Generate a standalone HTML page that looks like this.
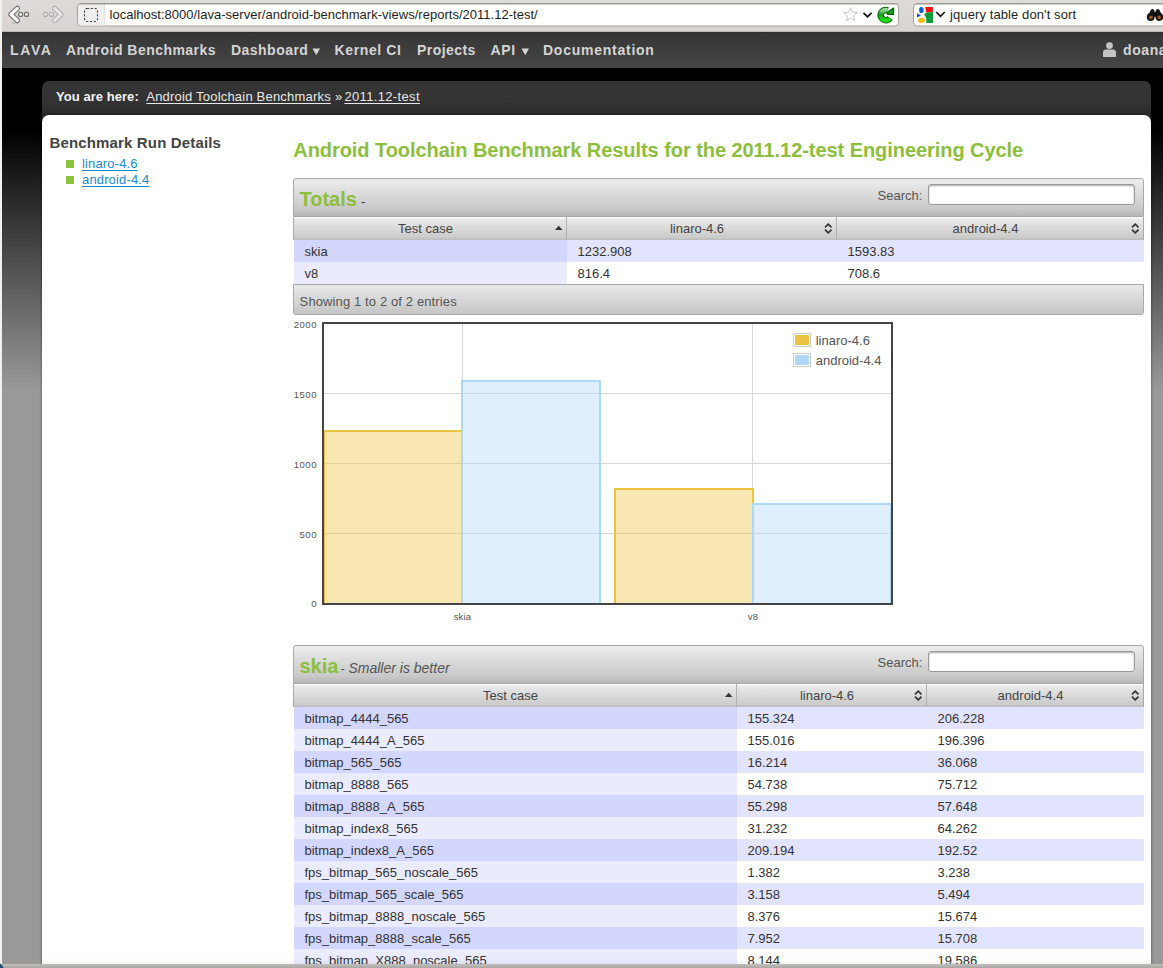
<!DOCTYPE html>
<html><head><meta charset="utf-8">
<style>
*{box-sizing:border-box;margin:0;padding:0}
html,body{width:1163px;height:968px;overflow:hidden;background:#dad6d3;font-family:"Liberation Sans",sans-serif;position:relative}
.a{position:absolute;white-space:nowrap}
#lframe{left:0;top:0;width:2px;height:968px;background:#f3f2f0;z-index:5}
#toolbar{left:2px;top:0;width:1161px;height:32px;background:linear-gradient(#dedad7,#d8d4d1);border-bottom:1px solid #bdb9b5}
#status{left:0;top:964px;width:1163px;height:4px;background:linear-gradient(#c3bfbb,#a9a5a2);z-index:5}
#viewport{left:2px;top:32px;width:1161px;height:932px;background:linear-gradient(#000 0px,#000 98px,#999 358px,#999 100%)}
#nav{left:2px;top:32px;width:1161px;height:36px;background:linear-gradient(#2e2e2e,#363636 2px,#454545 34px,#4a4a4a)}
#crumb{left:42px;top:81px;width:1109px;height:44px;background:linear-gradient(#353535,#333 20px,#2a2a2a 34px);border-radius:7px 7px 0 0}
#content{left:42px;top:115px;width:1109px;height:900px;background:#fff;border-radius:7px 7px 0 0;box-shadow:0 0 3px rgba(0,0,0,.55)}
.tbar{background:linear-gradient(#ededed,#c8c8c8 82%,#b6b6b6);border:1px solid #a8a8a8;border-radius:3px 3px 0 0}
.tfoot{background:linear-gradient(#e9e9e9,#c5c5c5);border:1px solid #a8a8a8;border-radius:0 0 3px 3px}
.th{background:linear-gradient(#fafafa,#fafafa 1px,#e9e9e9 2px,#cacaca 21px,#bebebe 22px);border-right:1px solid #b0b0b0}
.sinput{background:#fff;border:1px solid #9a9a9a;border-radius:3px;box-shadow:inset 0 1px 2px rgba(0,0,0,.35)}
.tb{font-size:13px;color:#222;line-height:13px}
#fade{left:42px;top:958px;width:1109px;height:6px;background:linear-gradient(rgba(0,0,0,0),rgba(0,0,0,.045))}

</style></head>
<body>
<div class="a" id="lframe"></div>
<div class="a" id="toolbar"></div>
<svg class="a" style="left:0;top:0" width="1163" height="32">
<defs>
<linearGradient id="rg" x1="0" y1="0" x2="0" y2="1"><stop offset="0" stop-color="#8fd88f"/><stop offset=".45" stop-color="#1d9a1d"/><stop offset="1" stop-color="#18e018"/></linearGradient>
</defs>
<ellipse cx="15" cy="23" rx="4.5" ry="1.1" fill="#bdb9b5" opacity=".6"/>
<path d="M17.4 8.3L10.9 14.4L17.4 20.5" fill="none" stroke="#6c6c6c" stroke-width="5.2" stroke-linecap="round" stroke-linejoin="round"/>
<path d="M17.4 8.3L10.9 14.4L17.4 20.5" fill="none" stroke="#fafafa" stroke-width="3.1" stroke-linecap="round" stroke-linejoin="round"/>
<circle cx="20.6" cy="14.4" r="2.05" fill="#fff" stroke="#6c6c6c" stroke-width="1.2"/>
<circle cx="26.5" cy="14.4" r="2.05" fill="#fff" stroke="#6c6c6c" stroke-width="1.2"/>
<path d="M54.6 8.3L61.1 14.4L54.6 20.5" fill="none" stroke="#b0aeab" stroke-width="5.2" stroke-linecap="round" stroke-linejoin="round"/>
<path d="M54.6 8.3L61.1 14.4L54.6 20.5" fill="none" stroke="#e6e4e2" stroke-width="3.1" stroke-linecap="round" stroke-linejoin="round"/>
<circle cx="45.5" cy="14.4" r="2.05" fill="#e8e6e4" stroke="#b2b0ad" stroke-width="1.2"/>
<circle cx="51.5" cy="14.4" r="2.05" fill="#e8e6e4" stroke="#b2b0ad" stroke-width="1.2"/>
<!-- url bar -->
<rect x="77.5" y="3.5" width="821" height="22.5" rx="3.5" fill="#fff" stroke="#a5a19d"/>
<path d="M81 4H104V25.5H81Q78 25.5 78 22.5V7Q78 4 81 4z" fill="#efefef"/>
<path d="M104.5 4V25.5" stroke="#e2e2e2"/>
<path d="M78.5 5.5Q79 4 81 4.2H898" stroke="#8a8682" stroke-width="1" fill="none" opacity=".6"/>
<rect x="84.5" y="8.5" width="13" height="13" rx="2.5" fill="none" stroke="#444" stroke-width="1.1" stroke-dasharray="2.2 1.6"/>
<path d="M850.5 7.6L852.4 12.3L857.4 12.6L853.5 15.8L854.8 20.7L850.5 18L846.2 20.7L847.5 15.8L843.6 12.6L848.6 12.3z" fill="#fff" stroke="#c8c8c8" stroke-width="1"/>
<path d="M863.5 12.8L867.5 16.8L871.5 12.8" fill="none" stroke="#111" stroke-width="1.7"/>
<path d="M890 18A5.1 5.1 0 1 1 887.6 10.3" fill="none" stroke="#0b640b" stroke-width="6.6"/>
<path d="M890 18A5.1 5.1 0 1 1 887.6 10.3" fill="none" stroke="url(#rg)" stroke-width="4.6"/>
<path d="M886.6 12.6L893.6 8V14.4H887.4z" fill="#1c9c1c" stroke="#0b640b" stroke-width="1.1" stroke-linejoin="round"/>
<!-- search bar -->
<rect x="913.5" y="3.5" width="300" height="22.5" rx="3.5" fill="#fff" stroke="#a5a19d"/>
<path d="M914.5 5.5Q915 4 917 4.2H1163" stroke="#8a8682" stroke-width="1" fill="none" opacity=".6"/>
<ellipse cx="921.4" cy="10" rx="2.3" ry="3.1" fill="#1060d0"/>
<path d="M917 13.2L921 15.6L917 17.4z" fill="#1650b8"/>
<ellipse cx="921.5" cy="20.3" rx="3.4" ry="2.6" fill="#f2b80e"/>
<path d="M925.2 7H932.9V12.5H925.8Q926.2 10 925.2 7z" fill="#ee1111"/>
<path d="M924 14.2Q926 12.2 929 12.2H933V23H926.2Q927.2 18 924 14.2z" fill="#0d9a3a"/>
<path d="M936.3 12L940.5 16.3L944.7 12" fill="none" stroke="#111" stroke-width="1.7"/>
<!-- binoculars -->
<path d="M1147.5 16.5L1150.6 10.3Q1151.3 9 1152.6 9Q1154 9 1154.4 10.5L1154.6 12H1155.6L1155.8 10.5Q1156.2 9 1157.6 9Q1158.9 9 1159.6 10.3L1162.8 16.5z" fill="#161616"/>
<circle cx="1150.7" cy="17" r="3.9" fill="#161616"/>
<circle cx="1159.4" cy="17" r="3.9" fill="#161616"/>
<rect x="1153.5" y="12" width="3.2" height="4.5" fill="#0a0a0a"/>
<circle cx="1150.9" cy="17.4" r="2" fill="#7a3c0c"/>
<circle cx="1159.2" cy="17.4" r="2" fill="#7a3c0c"/>
<circle cx="1150.9" cy="17.2" r="1" fill="#c86a1e"/>
<circle cx="1159.2" cy="17.2" r="1" fill="#c86a1e"/>
</svg>
<div class="a" style="left:109.5px;top:7.5px;font-size:13px;line-height:13px;color:#1e1e1e;letter-spacing:0.02px">localhost:8000/lava-server/android-benchmark-views/reports/2011.12-test/</div>
<div class="a" style="left:950px;top:7.5px;font-size:13px;line-height:13px;color:#1e1e1e;letter-spacing:0.1px">jquery table don't sort</div>
<div class="a" id="viewport"></div>
<div class="a" id="nav"></div>
<div class="a" style="left:10px;top:42.95px;font-size:14px;line-height:14px;color:#d4d4d4;font-weight:bold;font-style:normal;letter-spacing:1.65px">LAVA</div>
<div class="a" style="left:66px;top:42.95px;font-size:14px;line-height:14px;color:#d4d4d4;font-weight:bold;font-style:normal;letter-spacing:0.47px">Android Benchmarks</div>
<div class="a" style="left:231px;top:42.95px;font-size:14px;line-height:14px;color:#d4d4d4;font-weight:bold;font-style:normal;letter-spacing:0.47px">Dashboard</div>
<div class="a" style="left:334.5px;top:42.95px;font-size:14px;line-height:14px;color:#d4d4d4;font-weight:bold;font-style:normal;letter-spacing:0.62px">Kernel CI</div>
<div class="a" style="left:417px;top:42.95px;font-size:14px;line-height:14px;color:#d4d4d4;font-weight:bold;font-style:normal;letter-spacing:0.45px">Projects</div>
<div class="a" style="left:490.5px;top:42.95px;font-size:14px;line-height:14px;color:#d4d4d4;font-weight:bold;font-style:normal;letter-spacing:0.7px">API</div>
<div class="a" style="left:543px;top:42.95px;font-size:14px;line-height:14px;color:#d4d4d4;font-weight:bold;font-style:normal;letter-spacing:0.75px">Documentation</div>
<div class="a" style="left:1123px;top:42.95px;font-size:14px;line-height:14px;color:#d4d4d4;font-weight:bold;font-style:normal;letter-spacing:0.6px">doanac</div>
<svg class="a" style="left:311.5px;top:47.5px" width="9" height="8"><path d="M0.5 0.5h7.5l-3.75 6.8z" fill="#d4d4d4"/></svg>
<svg class="a" style="left:520.5px;top:47.5px" width="9" height="8"><path d="M0.5 0.5h7.5l-3.75 6.8z" fill="#d4d4d4"/></svg>
<svg class="a" style="left:1103px;top:42px" width="13" height="15"><circle cx="6.5" cy="3.6" r="3.4" fill="#c4c4c4"/><path d="M0 15V10.5Q0 7.6 3 7.6H10Q13 7.6 13 10.5V15z" fill="#c4c4c4"/></svg>
<div class="a" id="crumb"></div>
<div class="a" id="content"></div>
<div class="a" style="left:56px;top:89.60px;font-size:13px;line-height:13px;color:#f2f2f2;font-weight:bold;font-style:normal;letter-spacing:0.05px">You are here:</div>
<div class="a" style="left:146.3px;top:89.60px;font-size:13px;line-height:13px;color:#e8e8e8;font-weight:normal;font-style:normal;text-decoration:underline;text-underline-offset:2px;letter-spacing:0.2px">Android Toolchain Benchmarks</div>
<div class="a" style="left:335px;top:89.60px;font-size:13px;line-height:13px;color:#e8e8e8;font-weight:normal;font-style:normal;">»</div>
<div class="a" style="left:344.4px;top:89.60px;font-size:13px;line-height:13px;color:#e8e8e8;font-weight:normal;font-style:normal;text-decoration:underline;text-underline-offset:2px;letter-spacing:0.35px">2011.12-test</div>
<div class="a" style="left:49.5px;top:135.30px;font-size:15px;line-height:15px;color:#444;font-weight:bold;font-style:normal;letter-spacing:0.15px">Benchmark Run Details</div>
<div class="a" style="left:66px;top:160px;width:8px;height:8px;background:#8dc23f"></div>
<div class="a" style="left:66px;top:176px;width:8px;height:8px;background:#8dc23f"></div>
<div class="a" style="left:82px;top:156.60px;font-size:13px;line-height:13px;color:#1a8ad0;font-weight:normal;font-style:normal;text-decoration:underline;text-underline-offset:2px;letter-spacing:0.15px">linaro-4.6</div>
<div class="a" style="left:82px;top:172.60px;font-size:13px;line-height:13px;color:#1a8ad0;font-weight:normal;font-style:normal;text-decoration:underline;text-underline-offset:2px;letter-spacing:0.15px">android-4.4</div>
<div class="a" style="left:293.3px;top:140.07px;font-size:20px;line-height:20px;color:#8dbe3d;font-weight:bold;font-style:normal;letter-spacing:-0.06px">Android Toolchain Benchmark Results for the 2011.12-test Engineering Cycle</div>
<div class="a tbar" style="left:293px;top:178px;width:851px;height:39px"></div>
<div class="a" style="left:299.5px;top:189.07px;font-size:20px;line-height:20px;color:#8dbe3d;font-weight:bold;font-style:normal;">Totals</div>
<div class="a" style="left:361px;top:195.00px;font-size:13px;line-height:13px;color:#333;font-weight:normal;font-style:normal;">-</div>
<div class="a" style="left:877.6px;top:189.00px;font-size:13px;line-height:13px;color:#555;font-weight:normal;font-style:normal;">Search:</div>
<div class="a sinput" style="left:928px;top:184px;width:207px;height:21px"></div>
<div class="a th" style="left:293px;top:217px;width:274px;height:23px;border-left:1px solid #a8a8a8"></div>
<div class="a" style="left:225.5px;width:400px;text-align:center;top:222.00px;font-size:13px;line-height:13px;color:#444;font-weight:normal;">Test case</div>
<svg class="a" style="left:554.5px;top:225px" width="8" height="6"><path d="M0 5H7.5L3.75 0.8z" fill="#333"/></svg>
<div class="a th" style="left:567px;top:217px;width:270px;height:23px"></div>
<div class="a" style="left:497.0px;width:400px;text-align:center;top:222.00px;font-size:13px;line-height:13px;color:#444;font-weight:normal;">linaro-4.6</div>
<svg class="a" style="left:824.3px;top:223px" width="9" height="11"><path d="M1 4.4L4.25 1.1L7.5 4.4M1 6.6L4.25 9.9L7.5 6.6" fill="none" stroke="#333" stroke-width="1.6"/></svg>
<div class="a th" style="left:837px;top:217px;width:307px;height:23px;border-right:1px solid #a8a8a8"></div>
<div class="a" style="left:785.5px;width:400px;text-align:center;top:222.00px;font-size:13px;line-height:13px;color:#444;font-weight:normal;">android-4.4</div>
<svg class="a" style="left:1131.3px;top:223px" width="9" height="11"><path d="M1 4.4L4.25 1.1L7.5 4.4M1 6.6L4.25 9.9L7.5 6.6" fill="none" stroke="#333" stroke-width="1.6"/></svg>
<div class="a" style="left:294px;top:240px;width:273px;height:22px;background:#d3d6ff"></div>
<div class="a" style="left:304.5px;top:245.00px;font-size:13px;line-height:13px;color:#333;font-weight:normal;font-style:normal;">skia</div>
<div class="a" style="left:567px;top:240px;width:270px;height:22px;background:#e2e4ff"></div>
<div class="a" style="left:577.5px;top:245.00px;font-size:13px;line-height:13px;color:#333;font-weight:normal;font-style:normal;">1232.908</div>
<div class="a" style="left:837px;top:240px;width:307px;height:22px;background:#e2e4ff"></div>
<div class="a" style="left:847.5px;top:245.00px;font-size:13px;line-height:13px;color:#333;font-weight:normal;font-style:normal;">1593.83</div>
<div class="a" style="left:294px;top:262px;width:273px;height:22px;background:#eaebff"></div>
<div class="a" style="left:304.5px;top:267.00px;font-size:13px;line-height:13px;color:#333;font-weight:normal;font-style:normal;">v8</div>
<div class="a" style="left:567px;top:262px;width:270px;height:22px;background:#fff"></div>
<div class="a" style="left:577.5px;top:267.00px;font-size:13px;line-height:13px;color:#333;font-weight:normal;font-style:normal;">816.4</div>
<div class="a" style="left:837px;top:262px;width:307px;height:22px;background:#fff"></div>
<div class="a" style="left:847.5px;top:267.00px;font-size:13px;line-height:13px;color:#333;font-weight:normal;font-style:normal;">708.6</div>
<div class="a tfoot" style="left:293px;top:284px;width:851px;height:31px"></div>
<div class="a" style="left:299.6px;top:295.00px;font-size:13px;line-height:13px;color:#555;font-weight:normal;font-style:normal;letter-spacing:0.12px">Showing 1 to 2 of 2 entries</div>
<svg class="a" style="left:0;top:0" width="1163" height="968"><path d="M324 393.5H891" stroke="#d8d8d8" stroke-width="1"/><path d="M324 463.5H891" stroke="#d8d8d8" stroke-width="1"/><path d="M324 533.5H891" stroke="#d8d8d8" stroke-width="1"/><path d="M462.5 324V603" stroke="#d8d8d8" stroke-width="1"/><path d="M752.5 324V603" stroke="#d8d8d8" stroke-width="1"/><rect x="324" y="431" width="138" height="172" fill="#edc240" fill-opacity="0.4"/><path d="M324 603V431H462V603" fill="none" stroke="#edc240" stroke-width="2"/><rect x="462" y="381" width="138" height="222" fill="#afd8f8" fill-opacity="0.4"/><path d="M462 603V381H600V603" fill="none" stroke="#afd8f8" stroke-width="2"/><rect x="615" y="489" width="138" height="114" fill="#edc240" fill-opacity="0.4"/><path d="M615 603V489H753V603" fill="none" stroke="#edc240" stroke-width="2"/><rect x="753" y="504" width="138" height="99" fill="#afd8f8" fill-opacity="0.4"/><path d="M753 603V504H891V603" fill="none" stroke="#afd8f8" stroke-width="2"/><rect x="323" y="323" width="569" height="281" fill="none" stroke="#454545" stroke-width="2"/><rect x="793.5" y="333.5" width="17" height="13" fill="#fff" stroke="#cccccc" stroke-width="1"/><rect x="795" y="335" width="14" height="10" fill="#edc240"/><rect x="793.5" y="353.5" width="17" height="13" fill="#fff" stroke="#cccccc" stroke-width="1"/><rect x="795" y="355" width="14" height="10" fill="#afd8f8"/></svg>
<div class="a" style="left:217px;width:100px;text-align:right;top:319.96px;font-size:9.5px;line-height:9.5px;color:#545454;letter-spacing:0.55px">2000</div>
<div class="a" style="left:217px;width:100px;text-align:right;top:389.96px;font-size:9.5px;line-height:9.5px;color:#545454;letter-spacing:0.55px">1500</div>
<div class="a" style="left:217px;width:100px;text-align:right;top:459.96px;font-size:9.5px;line-height:9.5px;color:#545454;letter-spacing:0.55px">1000</div>
<div class="a" style="left:217px;width:100px;text-align:right;top:529.96px;font-size:9.5px;line-height:9.5px;color:#545454;letter-spacing:0.55px">500</div>
<div class="a" style="left:217px;width:100px;text-align:right;top:598.96px;font-size:9.5px;line-height:9.5px;color:#545454;letter-spacing:0.55px">0</div>
<div class="a" style="left:362.5px;width:200px;text-align:center;top:611.96px;font-size:9.5px;line-height:9.5px;color:#545454;letter-spacing:0.2px">skia</div>
<div class="a" style="left:653px;width:200px;text-align:center;top:611.96px;font-size:9.5px;line-height:9.5px;color:#545454;letter-spacing:0.2px">v8</div>
<div class="a" style="left:815.7px;top:334.00px;font-size:13px;line-height:13px;color:#545454;">linaro-4.6</div>
<div class="a" style="left:815.7px;top:354.00px;font-size:13px;line-height:13px;color:#545454;">android-4.4</div>
<div class="a tbar" style="left:293px;top:645px;width:851px;height:39px"></div>
<div class="a" style="left:299.5px;top:656.07px;font-size:20px;line-height:20px;color:#8dbe3d;font-weight:bold;font-style:normal;">skia</div>
<div class="a" style="left:340.5px;top:662.00px;font-size:13px;line-height:13px;color:#555;font-weight:normal;font-style:normal;">- <i style="font-size:14px">Smaller is better</i></div>
<div class="a" style="left:877.6px;top:656.00px;font-size:13px;line-height:13px;color:#555;font-weight:normal;font-style:normal;">Search:</div>
<div class="a sinput" style="left:928px;top:651px;width:207px;height:21px"></div>
<div class="a th" style="left:293px;top:684px;width:444px;height:23px;border-left:1px solid #a8a8a8"></div>
<div class="a" style="left:310.5px;width:400px;text-align:center;top:689.00px;font-size:13px;line-height:13px;color:#444;font-weight:normal;">Test case</div>
<svg class="a" style="left:724.5px;top:692px" width="8" height="6"><path d="M0 5H7.5L3.75 0.8z" fill="#333"/></svg>
<div class="a th" style="left:737px;top:684px;width:190px;height:23px"></div>
<div class="a" style="left:627.0px;width:400px;text-align:center;top:689.00px;font-size:13px;line-height:13px;color:#444;font-weight:normal;">linaro-4.6</div>
<svg class="a" style="left:914.3px;top:690px" width="9" height="11"><path d="M1 4.4L4.25 1.1L7.5 4.4M1 6.6L4.25 9.9L7.5 6.6" fill="none" stroke="#333" stroke-width="1.6"/></svg>
<div class="a th" style="left:927px;top:684px;width:217px;height:23px;border-right:1px solid #a8a8a8"></div>
<div class="a" style="left:830.5px;width:400px;text-align:center;top:689.00px;font-size:13px;line-height:13px;color:#444;font-weight:normal;">android-4.4</div>
<svg class="a" style="left:1131.3px;top:690px" width="9" height="11"><path d="M1 4.4L4.25 1.1L7.5 4.4M1 6.6L4.25 9.9L7.5 6.6" fill="none" stroke="#333" stroke-width="1.6"/></svg>
<div class="a" style="left:294px;top:707px;width:443px;height:22px;background:#d3d6ff"></div>
<div class="a" style="left:304.5px;top:712.00px;font-size:13px;line-height:13px;color:#333;font-weight:normal;font-style:normal;">bitmap_4444_565</div>
<div class="a" style="left:737px;top:707px;width:190px;height:22px;background:#e2e4ff"></div>
<div class="a" style="left:747.5px;top:712.00px;font-size:13px;line-height:13px;color:#333;font-weight:normal;font-style:normal;">155.324</div>
<div class="a" style="left:927px;top:707px;width:217px;height:22px;background:#e2e4ff"></div>
<div class="a" style="left:937.5px;top:712.00px;font-size:13px;line-height:13px;color:#333;font-weight:normal;font-style:normal;">206.228</div>
<div class="a" style="left:294px;top:729px;width:443px;height:22px;background:#eaebff"></div>
<div class="a" style="left:304.5px;top:734.00px;font-size:13px;line-height:13px;color:#333;font-weight:normal;font-style:normal;">bitmap_4444_A_565</div>
<div class="a" style="left:737px;top:729px;width:190px;height:22px;background:#fff"></div>
<div class="a" style="left:747.5px;top:734.00px;font-size:13px;line-height:13px;color:#333;font-weight:normal;font-style:normal;">155.016</div>
<div class="a" style="left:927px;top:729px;width:217px;height:22px;background:#fff"></div>
<div class="a" style="left:937.5px;top:734.00px;font-size:13px;line-height:13px;color:#333;font-weight:normal;font-style:normal;">196.396</div>
<div class="a" style="left:294px;top:751px;width:443px;height:22px;background:#d3d6ff"></div>
<div class="a" style="left:304.5px;top:756.00px;font-size:13px;line-height:13px;color:#333;font-weight:normal;font-style:normal;">bitmap_565_565</div>
<div class="a" style="left:737px;top:751px;width:190px;height:22px;background:#e2e4ff"></div>
<div class="a" style="left:747.5px;top:756.00px;font-size:13px;line-height:13px;color:#333;font-weight:normal;font-style:normal;">16.214</div>
<div class="a" style="left:927px;top:751px;width:217px;height:22px;background:#e2e4ff"></div>
<div class="a" style="left:937.5px;top:756.00px;font-size:13px;line-height:13px;color:#333;font-weight:normal;font-style:normal;">36.068</div>
<div class="a" style="left:294px;top:773px;width:443px;height:22px;background:#eaebff"></div>
<div class="a" style="left:304.5px;top:778.00px;font-size:13px;line-height:13px;color:#333;font-weight:normal;font-style:normal;">bitmap_8888_565</div>
<div class="a" style="left:737px;top:773px;width:190px;height:22px;background:#fff"></div>
<div class="a" style="left:747.5px;top:778.00px;font-size:13px;line-height:13px;color:#333;font-weight:normal;font-style:normal;">54.738</div>
<div class="a" style="left:927px;top:773px;width:217px;height:22px;background:#fff"></div>
<div class="a" style="left:937.5px;top:778.00px;font-size:13px;line-height:13px;color:#333;font-weight:normal;font-style:normal;">75.712</div>
<div class="a" style="left:294px;top:795px;width:443px;height:22px;background:#d3d6ff"></div>
<div class="a" style="left:304.5px;top:800.00px;font-size:13px;line-height:13px;color:#333;font-weight:normal;font-style:normal;">bitmap_8888_A_565</div>
<div class="a" style="left:737px;top:795px;width:190px;height:22px;background:#e2e4ff"></div>
<div class="a" style="left:747.5px;top:800.00px;font-size:13px;line-height:13px;color:#333;font-weight:normal;font-style:normal;">55.298</div>
<div class="a" style="left:927px;top:795px;width:217px;height:22px;background:#e2e4ff"></div>
<div class="a" style="left:937.5px;top:800.00px;font-size:13px;line-height:13px;color:#333;font-weight:normal;font-style:normal;">57.648</div>
<div class="a" style="left:294px;top:817px;width:443px;height:22px;background:#eaebff"></div>
<div class="a" style="left:304.5px;top:822.00px;font-size:13px;line-height:13px;color:#333;font-weight:normal;font-style:normal;">bitmap_index8_565</div>
<div class="a" style="left:737px;top:817px;width:190px;height:22px;background:#fff"></div>
<div class="a" style="left:747.5px;top:822.00px;font-size:13px;line-height:13px;color:#333;font-weight:normal;font-style:normal;">31.232</div>
<div class="a" style="left:927px;top:817px;width:217px;height:22px;background:#fff"></div>
<div class="a" style="left:937.5px;top:822.00px;font-size:13px;line-height:13px;color:#333;font-weight:normal;font-style:normal;">64.262</div>
<div class="a" style="left:294px;top:839px;width:443px;height:22px;background:#d3d6ff"></div>
<div class="a" style="left:304.5px;top:844.00px;font-size:13px;line-height:13px;color:#333;font-weight:normal;font-style:normal;">bitmap_index8_A_565</div>
<div class="a" style="left:737px;top:839px;width:190px;height:22px;background:#e2e4ff"></div>
<div class="a" style="left:747.5px;top:844.00px;font-size:13px;line-height:13px;color:#333;font-weight:normal;font-style:normal;">209.194</div>
<div class="a" style="left:927px;top:839px;width:217px;height:22px;background:#e2e4ff"></div>
<div class="a" style="left:937.5px;top:844.00px;font-size:13px;line-height:13px;color:#333;font-weight:normal;font-style:normal;">192.52</div>
<div class="a" style="left:294px;top:861px;width:443px;height:22px;background:#eaebff"></div>
<div class="a" style="left:304.5px;top:866.00px;font-size:13px;line-height:13px;color:#333;font-weight:normal;font-style:normal;">fps_bitmap_565_noscale_565</div>
<div class="a" style="left:737px;top:861px;width:190px;height:22px;background:#fff"></div>
<div class="a" style="left:747.5px;top:866.00px;font-size:13px;line-height:13px;color:#333;font-weight:normal;font-style:normal;">1.382</div>
<div class="a" style="left:927px;top:861px;width:217px;height:22px;background:#fff"></div>
<div class="a" style="left:937.5px;top:866.00px;font-size:13px;line-height:13px;color:#333;font-weight:normal;font-style:normal;">3.238</div>
<div class="a" style="left:294px;top:883px;width:443px;height:22px;background:#d3d6ff"></div>
<div class="a" style="left:304.5px;top:888.00px;font-size:13px;line-height:13px;color:#333;font-weight:normal;font-style:normal;">fps_bitmap_565_scale_565</div>
<div class="a" style="left:737px;top:883px;width:190px;height:22px;background:#e2e4ff"></div>
<div class="a" style="left:747.5px;top:888.00px;font-size:13px;line-height:13px;color:#333;font-weight:normal;font-style:normal;">3.158</div>
<div class="a" style="left:927px;top:883px;width:217px;height:22px;background:#e2e4ff"></div>
<div class="a" style="left:937.5px;top:888.00px;font-size:13px;line-height:13px;color:#333;font-weight:normal;font-style:normal;">5.494</div>
<div class="a" style="left:294px;top:905px;width:443px;height:22px;background:#eaebff"></div>
<div class="a" style="left:304.5px;top:910.00px;font-size:13px;line-height:13px;color:#333;font-weight:normal;font-style:normal;">fps_bitmap_8888_noscale_565</div>
<div class="a" style="left:737px;top:905px;width:190px;height:22px;background:#fff"></div>
<div class="a" style="left:747.5px;top:910.00px;font-size:13px;line-height:13px;color:#333;font-weight:normal;font-style:normal;">8.376</div>
<div class="a" style="left:927px;top:905px;width:217px;height:22px;background:#fff"></div>
<div class="a" style="left:937.5px;top:910.00px;font-size:13px;line-height:13px;color:#333;font-weight:normal;font-style:normal;">15.674</div>
<div class="a" style="left:294px;top:927px;width:443px;height:22px;background:#d3d6ff"></div>
<div class="a" style="left:304.5px;top:932.00px;font-size:13px;line-height:13px;color:#333;font-weight:normal;font-style:normal;">fps_bitmap_8888_scale_565</div>
<div class="a" style="left:737px;top:927px;width:190px;height:22px;background:#e2e4ff"></div>
<div class="a" style="left:747.5px;top:932.00px;font-size:13px;line-height:13px;color:#333;font-weight:normal;font-style:normal;">7.952</div>
<div class="a" style="left:927px;top:927px;width:217px;height:22px;background:#e2e4ff"></div>
<div class="a" style="left:937.5px;top:932.00px;font-size:13px;line-height:13px;color:#333;font-weight:normal;font-style:normal;">15.708</div>
<div class="a" style="left:294px;top:949px;width:443px;height:22px;background:#eaebff"></div>
<div class="a" style="left:304.5px;top:954.00px;font-size:13px;line-height:13px;color:#333;font-weight:normal;font-style:normal;">fps_bitmap_X888_noscale_565</div>
<div class="a" style="left:737px;top:949px;width:190px;height:22px;background:#fff"></div>
<div class="a" style="left:747.5px;top:954.00px;font-size:13px;line-height:13px;color:#333;font-weight:normal;font-style:normal;">8.144</div>
<div class="a" style="left:927px;top:949px;width:217px;height:22px;background:#fff"></div>
<div class="a" style="left:937.5px;top:954.00px;font-size:13px;line-height:13px;color:#333;font-weight:normal;font-style:normal;">19.586</div>
<div class="a" id="fade"></div>
<div class="a" id="status"></div>
<svg class="a" style="left:0;top:962px;z-index:6" width="6" height="6"><path d="M0 1.5Q2.5 2.5 3.5 6H0z" fill="#1d4f7a"/></svg>
</body></html>
